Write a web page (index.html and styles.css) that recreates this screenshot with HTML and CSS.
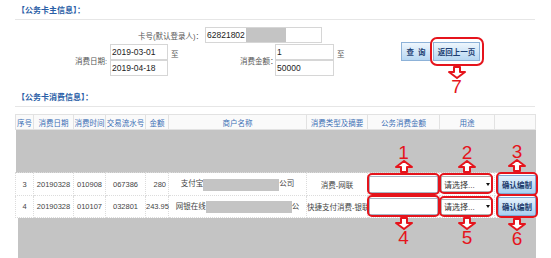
FILE: index.html
```html
<!DOCTYPE html>
<html lang="zh">
	<head>
		<meta charset="utf-8">
		<title>公务卡信息</title>
		<link rel="stylesheet" href="styles.css">
	</head>
	<body>
		<div class="page">
			<div class="title">【公务卡主信息】：</div>
			<div class="query">
				<div class="row card-row">
					<label class="lbl lbl-card">卡号(默认登录人)：</label>
					<div class="field card"><span>62821802</span><span class="mask"></span></div>
				</div>
				<div class="row range-row">
					<label class="lbl lbl-date">消费日期:</label>
					<div class="pair date">
						<div class="field">2019-03-01</div>
						<div class="field">2019-04-18</div>
					</div>
					<span class="to to-date">至</span>
					<label class="lbl lbl-amt">消费金额：</label>
					<div class="pair amt">
						<div class="field">1</div>
						<div class="field">50000</div>
					</div>
					<span class="to to-amt">至</span>
					<div class="btns">
						<button class="btn btn-query">查 询</button>
						<span class="marked mk-back">
							<button class="btn btn-back">返回上一页</button>
							<span class="mark down">
								<svg class="arrow" viewBox="0 0 18 13"><polygon points="6,1 12,1 12,6 17,6 9,12 1,6 6,6"/></svg>
								<b>7</b>
							</span>
						</span>
					</div>
				</div>
			</div>

			<div class="title title-list">【公务卡消费信息】：</div>
			<table class="list">
				<colgroup>
					<col style="width:18px"><col style="width:40px"><col style="width:32px"><col style="width:40px"><col style="width:23px">
					<col style="width:138px"><col style="width:61px"><col style="width:72px"><col style="width:55px"><col style="width:41px">
				</colgroup>
				<tr class="head">
					<th>序号</th><th>消费日期</th><th>消费时间</th><th>交易流水号</th><th>金额</th>
					<th>商户名称</th><th>消费类型及摘要</th><th>公务消费金额</th><th>用途</th><th></th>
				</tr>
				<tr class="blank"><td colspan="10"></td></tr>
				<tr class="item item-a">
					<td>3</td><td>20190328</td><td>010908</td><td>067386</td><td class="num">280</td>
					<td>支付宝<span class="mask-m w1"></span>公司</td>
					<td class="type">消费-网联</td>
					<td class="ctl">
						<span class="marked mk-input">
							<span class="ed-input"></span>
							<span class="mark up"><b>1</b><svg class="arrow" viewBox="0 0 18 13"><polygon points="9,1 17,7 12,7 12,12 6,12 6,7 1,7"/></svg></span>
						</span>
					</td>
					<td class="ctl">
						<span class="marked mk-select">
							<span class="ed-select">请选择...<i class="caret"></i></span>
							<span class="mark up"><b>2</b><svg class="arrow" viewBox="0 0 18 13"><polygon points="9,1 17,7 12,7 12,12 6,12 6,7 1,7"/></svg></span>
						</span>
					</td>
					<td class="ctl">
						<span class="marked mk-btn">
							<button class="ed-btn">确认编制</button>
							<span class="mark up"><b>3</b><svg class="arrow" viewBox="0 0 18 13"><polygon points="9,1 17,7 12,7 12,12 6,12 6,7 1,7"/></svg></span>
						</span>
					</td>
				</tr>
				<tr class="item item-b">
					<td>4</td><td>20190328</td><td>010107</td><td>032801</td><td class="num">243.95</td>
					<td>网银在线<span class="mask-m w2"></span>公</td>
					<td class="type">快捷支付消费-银联</td>
					<td class="ctl">
						<span class="marked mk-input">
							<span class="ed-input"></span>
							<span class="mark down"><svg class="arrow" viewBox="0 0 18 13"><polygon points="6,1 12,1 12,6 17,6 9,12 1,6 6,6"/></svg><b>4</b></span>
						</span>
					</td>
					<td class="ctl">
						<span class="marked mk-select">
							<span class="ed-select">请选择...<i class="caret"></i></span>
							<span class="mark down"><svg class="arrow" viewBox="0 0 18 13"><polygon points="6,1 12,1 12,6 17,6 9,12 1,6 6,6"/></svg><b>5</b></span>
						</span>
					</td>
					<td class="ctl">
						<span class="marked mk-btn">
							<button class="ed-btn">确认编制</button>
							<span class="mark down"><svg class="arrow" viewBox="0 0 18 13"><polygon points="6,1 12,1 12,6 17,6 9,12 1,6 6,6"/></svg><b>6</b></span>
						</span>
					</td>
				</tr>
				<tr class="blank blank-end"><td colspan="10"></td></tr>
			</table>
		</div>
	</body>
</html>
```

FILE: styles.css
```css
html {
	overflow: hidden;
}
body {
	margin: 0;
	height: 258px;
	overflow: hidden;
	background: #fff;
	color: #555;
	font-family: "Liberation Sans", "Noto Sans CJK SC", sans-serif;
}
.page {
	width: 520px;
	padding: 5px 0 0 15px;
}
.title {
	font-size: 8px;
	font-weight: bold;
	line-height: 12px;
	color: #2a5ea6;
	padding: 0 0 2px 2px;
	border-bottom: 1px solid #e6e6e6;
}
.title-list {
	margin-top: 16px;
}

/* query form */
.query {
	font-size: 7.5px;
}
.row {
	display: flex;
}
.card-row {
	margin-top: 7px;
}
.range-row {
	margin-top: 1px;
	align-items: flex-start;
}
.lbl {
	align-self: center;
	white-space: nowrap;
	text-align: right;
}
.lbl-card {
	width: 188px;
	padding-right: 2px;
}
.lbl-date {
	width: 92px;
	padding-right: 3px;
}
.lbl-amt {
	width: 35px;
}
.field {
	box-sizing: border-box;
	height: 16px;
	border: 1px solid #d6d6d6;
	background: #fff;
	color: #222;
	font-size: 8.5px;
	line-height: 14px;
	padding: 0 1px;
}
.card {
	width: 117px;
	display: flex;
}
.mask {
	width: 40px;
	margin-left: 1px;
	background: #c4c4c4;
}
.pair {
	display: flex;
	flex-direction: column;
}
.date {
	width: 58px;
}
.amt {
	width: 59px;
}
.to {
	padding: 4px 0 0 3px;
	box-sizing: border-box;
}
.to-date {
	width: 72px;
}
.to-amt {
	width: 67px;
}
.btns {
	display: flex;
	gap: 2px;
	margin-top: -2px;
}
.btn {
	box-sizing: border-box;
	height: 19px;
	padding: 0;
	border: 1px solid #8db2d8;
	background: linear-gradient(#eef6fd, #b7d7f2);
	color: #1d3f73;
	font: bold 7.5px "Liberation Sans", "Noto Sans CJK SC", sans-serif;
}
.btn-query {
	width: 30px;
	word-spacing: 2px;
}
.btn-back {
	width: 47px;
}

/* red annotations */
.marked {
	position: relative;
	display: inline-block;
	vertical-align: middle;
}
.marked::before {
	content: "";
	position: absolute;
	inset: -3px -2px -2px -2px;
	border: 2px solid #e5141c;
	border-radius: 5px;
}
.mk-back::before {
	inset: -5px -4px -5px -3px;
	border-radius: 7px;
}
.mk-select::before {
	inset: -3px 0 -2px -2px;
}
.mark {
	position: absolute;
	left: 50%;
	transform: translateX(-50%);
	display: flex;
	flex-direction: column;
	align-items: center;
	color: #e5141c;
}
.mark b {
	font-weight: normal;
	font-size: 19px;
	line-height: 15px;
}
.mark.up {
	bottom: calc(100% + 3px);
}
.mark.down {
	top: calc(100% + 2px);
}
.mk-back .mark.down {
	top: calc(100% + 5px);
}
.arrow {
	width: 18px;
	height: 13px;
	display: block;
}
.arrow polygon {
	fill: #fff;
	stroke: #e5141c;
	stroke-width: 2;
	stroke-linejoin: round;
}

/* list table */
.list {
	width: 520px;
	table-layout: fixed;
	border-collapse: collapse;
	margin-top: 7px;
	font-size: 7.5px;
}
.list th {
	height: 14px;
	padding: 0;
	font-weight: normal;
	color: #3a6fb5;
	background: #fafafa;
	border: 1px solid #e2e2e2;
	white-space: nowrap;
	overflow: hidden;
}
.list td {
	padding: 0;
	text-align: center;
	white-space: nowrap;
	color: #444;
	border: 1px dotted #dcdcdc;
}
.list .blank td {
	height: 42px;
	border: 0;
	background: #c4c4c4;
}
.list .blank-end td {
	background: linear-gradient(90deg, #fff 2px, #c4c4c4 2px);
	height: 40px;
}
.item-a td {
	height: 22px;
}
.item-b td {
	height: 21px;
}
.list td.num {
	text-align: right;
	padding-right: 2px;
}
.list td.type {
	overflow: hidden;
}
.list td.ctl {
	text-align: left;
	padding-left: 1px;
}
.mask-m {
	display: inline-block;
	height: 12px;
	vertical-align: middle;
	background: #c4c4c4;
}
.w1 {
	width: 76px;
}
.w2 {
	width: 86px;
}
.ed-input {
	display: block;
	box-sizing: border-box;
	width: 69px;
	height: 17px;
	border: 1px solid #a9b6c6;
	background: #fff;
}
.ed-select {
	display: flex;
	align-items: center;
	box-sizing: border-box;
	width: 52px;
	height: 16px;
	padding: 0 2px;
	border: 1px solid #b5b5b5;
	background: #fff;
	color: #333;
	font-size: 8px;
}
.caret {
	margin-left: auto;
	border-left: 2px solid transparent;
	border-right: 2px solid transparent;
	border-top: 3px solid #111;
}
.mk-btn {
	margin-left: 2px;
}
.ed-btn {
	display: block;
	box-sizing: border-box;
	width: 38px;
	height: 19px;
	padding: 0;
	border: 1px solid #7fa8d4;
	background: linear-gradient(#e4f1fc, #a9d0f1);
	color: #1b3a6b;
	font: bold 7.5px "Liberation Sans", "Noto Sans CJK SC", sans-serif;
}
```
